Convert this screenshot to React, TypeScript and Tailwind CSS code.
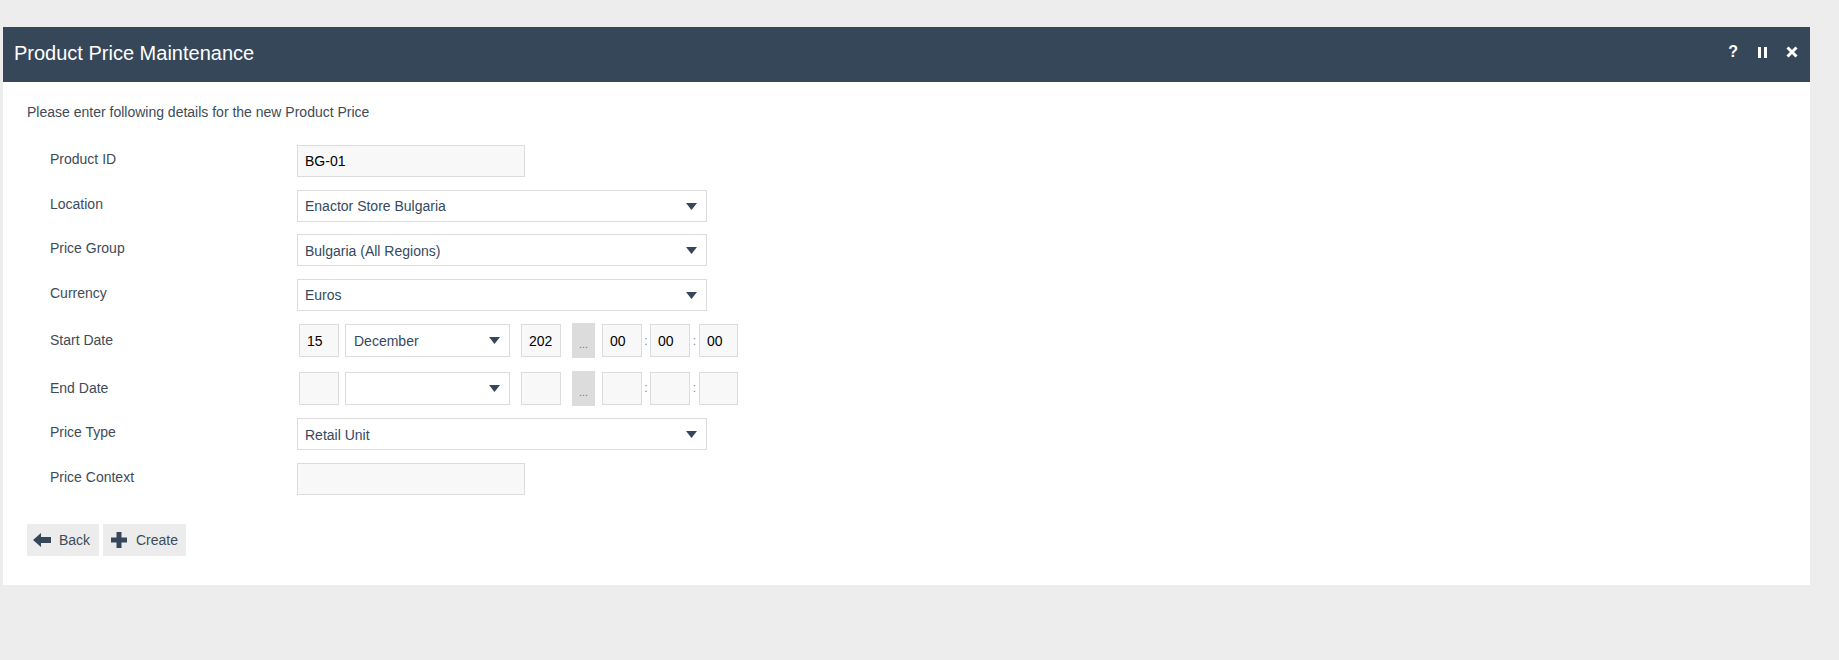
import React from 'react'

function Label({ children, date }: { children: React.ReactNode; date?: boolean }) {
  return (
    <div className={`w-[247px] shrink-0 text-[14px] leading-5 text-[#3d4b59] ${date ? 'pt-[7px]' : 'pt-[4px]'}`}>
      {children}
    </div>
  )
}

function TextBox({ value = '', width = 'w-[228px]' }: { value?: string; width?: string }) {
  return (
    <input
      readOnly
      value={value}
      className={`h-[32px] ${width} border border-[#dcdcdc] bg-[#f8f8f8] px-[7px] text-[14px] text-black outline-none`}
    />
  )
}

function Arrow() {
  return (
    <svg width="11" height="7" viewBox="0 0 11 7" className="pointer-events-none absolute right-[10px] top-[13px]">
      <polygon points="0,0 11,0 5.5,7" fill="#37475a" />
    </svg>
  )
}

function Select({ value, width = 'w-[410px]' }: { value: string; width?: string }) {
  return (
    <div className={`relative ${width}`}>
      <select
        defaultValue={value}
        className="h-[32px] w-full appearance-none border border-[#dcdcdc] bg-white pl-[7px] pt-[2px] text-[14px] text-[#34495e] outline-none"
      >
        <option value={value}>{value}</option>
      </select>
      <Arrow />
    </div>
  )
}

function SmallBox({ value = '', w = 'w-[40px]' }: { value?: string; w?: string }) {
  return (
    <input
      readOnly
      value={value}
      className={`h-[33px] ${w} border border-[#dcdcdc] bg-[#f8f8f8] px-[7px] text-[14px] text-black outline-none`}
    />
  )
}

function Colon({ w }: { w: string }) {
  return <span className={`${w} text-center text-[12px] leading-none text-[#7b8a99]`}>:</span>
}

function DateField({ day, month, year, h, m, s }: { day?: string; month?: string; year?: string; h?: string; m?: string; s?: string }) {
  return (
    <div className="ml-[2px] flex h-[35px] items-center">
      <SmallBox value={day} />
      <div className="relative ml-[6px] w-[165px]">
        <select
          defaultValue={month ?? ''}
          className="h-[33px] w-full appearance-none border border-[#dcdcdc] bg-white pl-[8px] pt-[2px] text-[14px] text-[#34495e] outline-none"
        >
          <option value={month ?? ''}>{month ?? ''}</option>
        </select>
        <Arrow />
      </div>
      <div className="ml-[11px]">
        <SmallBox value={year} />
      </div>
      <button className="ml-[11px] flex h-[35px] w-[23px] items-end justify-center bg-[#dcdcdc] pb-[8px] text-[11px] leading-none text-[#777]">
        ...
      </button>
      <div className="ml-[7px] flex items-center">
        <SmallBox value={h} />
        <Colon w="w-[8px]" />
        <SmallBox value={m} />
        <Colon w="w-[9px]" />
        <SmallBox value={s} w="w-[39px]" />
      </div>
    </div>
  )
}

export default function App() {
  return (
    <div className="min-h-[660px] w-full bg-[#ededed] pl-[3px] pt-[27px] font-['Liberation_Sans',Arial,sans-serif]">
      <div className="w-[1807px] bg-white">
        {/* Title bar */}
        <div className="flex h-[55px] items-center justify-between bg-[#37475a] pl-[11px] pr-[12px]">
          <h1 className="pb-[3px] text-[20px] text-white">Product Price Maintenance</h1>
          <div className="mb-[5px] flex items-center">
            <span className="text-[16px] font-bold leading-none text-white">?</span>
            <svg width="9" height="11" viewBox="0 0 9 11" className="ml-[20px]">
              <rect x="0" y="0" width="3" height="11" fill="#fff" />
              <rect x="6" y="0" width="3" height="11" fill="#fff" />
            </svg>
            <svg width="12" height="12" viewBox="0 0 12 12" className="ml-[19px]">
              <path d="M1.5 1.5 L10.5 10.5 M10.5 1.5 L1.5 10.5" stroke="#fff" strokeWidth="3" />
            </svg>
          </div>
        </div>

        {/* Body */}
        <div className="px-6 pb-[29px] pt-5">
          <p className="text-[14px] leading-5 text-[#3d4b59]">Please enter following details for the new Product Price</p>

          <div className="mt-[23px] flex flex-col gap-y-[12.5px] pl-[23px]">
            <div className="flex">
              <Label>Product ID</Label>
              <TextBox value="BG-01" />
            </div>
            <div className="flex">
              <Label>Location</Label>
              <Select value="Enactor Store Bulgaria" />
            </div>
            <div className="flex">
              <Label>Price Group</Label>
              <Select value="Bulgaria (All Regions)" />
            </div>
            <div className="flex">
              <Label>Currency</Label>
              <Select value="Euros" />
            </div>
            <div className="flex">
              <Label date>Start Date</Label>
              <DateField day="15" month="December" year="202" h="00" m="00" s="00" />
            </div>
            <div className="flex">
              <Label date>End Date</Label>
              <DateField />
            </div>
            <div className="flex">
              <Label>Price Type</Label>
              <Select value="Retail Unit" />
            </div>
            <div className="flex">
              <Label>Price Context</Label>
              <TextBox />
            </div>
          </div>

          {/* Actions */}
          <div className="mt-[29.5px] flex gap-1">
            <button className="flex h-[32px] w-[72px] items-center gap-2 bg-[#ececec] pl-[6px] text-[14px] text-[#3d4b59]">
              <svg width="18" height="14" viewBox="0 0 18 14">
                <polygon points="0,7 8,0 8,4 18,4 18,10 8,10 8,14" fill="#37475a" />
              </svg>
              Back
            </button>
            <button className="flex h-[32px] w-[83px] items-center gap-[9px] bg-[#ececec] pl-2 text-[14px] text-[#3d4b59]">
              <svg width="16" height="16" viewBox="0 0 16 16">
                <rect x="5.5" y="0" width="5" height="16" fill="#37475a" />
                <rect x="0" y="5.5" width="16" height="5" fill="#37475a" />
              </svg>
              Create
            </button>
          </div>
        </div>
      </div>
    </div>
  )
}
